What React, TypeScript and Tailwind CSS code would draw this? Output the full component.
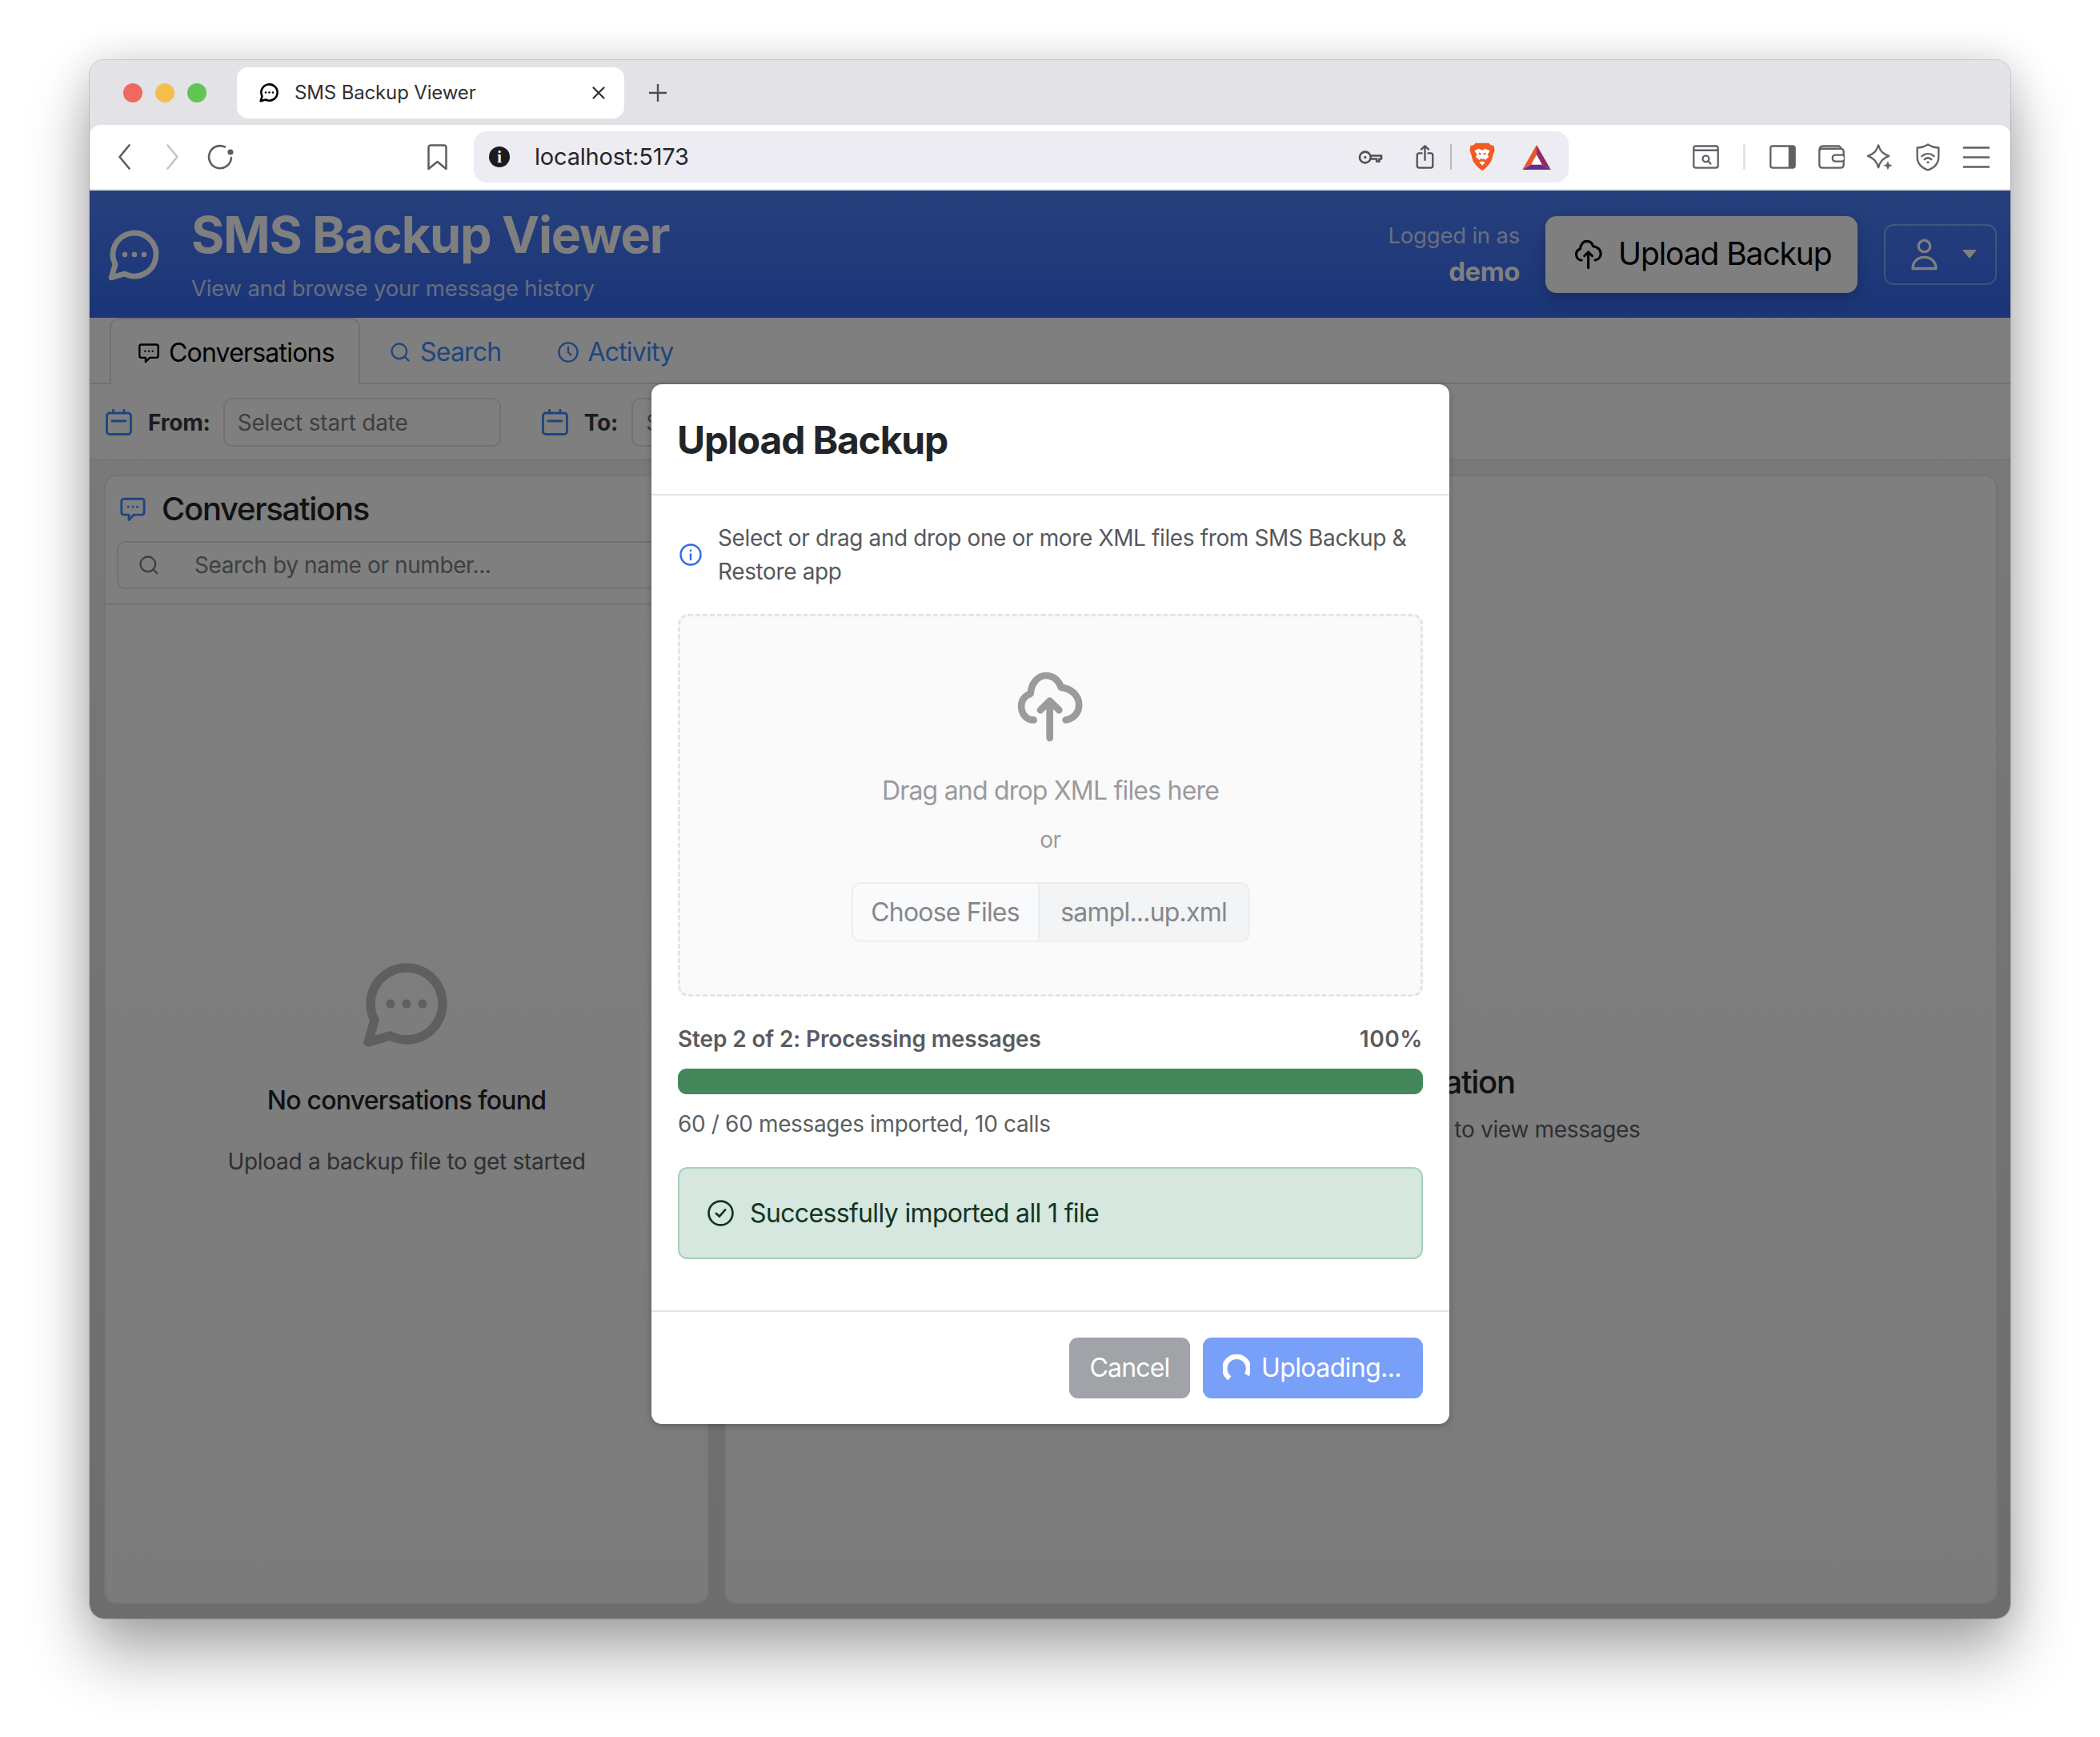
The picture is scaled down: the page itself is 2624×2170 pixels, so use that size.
import { Search } from "lucide-react";

type IconProps = { className?: string };

// Bubble with a tail at the lower left, used for the favicon, header and empty states.
function ChatBubble({ className }: IconProps) {
	return (
		<svg viewBox="0 0 24 24" fill="none" stroke="currentColor" strokeWidth="2.3" strokeLinejoin="round" className={className}>
			<path d="M7.9 20A9 9 0 1 0 4 16.1L2.4 21.6Z" />
			<circle cx="8" cy="12" r="1.1" fill="currentColor" stroke="none" />
			<circle cx="12" cy="12" r="1.1" fill="currentColor" stroke="none" />
			<circle cx="16" cy="12" r="1.1" fill="currentColor" stroke="none" />
		</svg>
	);
}

function ChatSquare({ className }: IconProps) {
	return (
		<svg viewBox="0 0 24 24" fill="none" stroke="currentColor" strokeWidth="2" strokeLinejoin="round" className={className}>
			<path d="M4 3h16a2 2 0 0 1 2 2v10a2 2 0 0 1-2 2h-7L8.5 21.5V17H4a2 2 0 0 1-2-2V5a2 2 0 0 1 2-2z" />
			<circle cx="8" cy="10" r="1" fill="currentColor" stroke="none" />
			<circle cx="12" cy="10" r="1" fill="currentColor" stroke="none" />
			<circle cx="16" cy="10" r="1" fill="currentColor" stroke="none" />
		</svg>
	);
}

function CloudUp({ className, width = 26 }: IconProps & { width?: number }) {
	return (
		<svg viewBox="90 55 255 265" fill="none" stroke="currentColor" strokeWidth={width} strokeLinecap="round" strokeLinejoin="round" className={className}>
			<path d="M155 237C125 237 108 212 108 185C108 162 122 145 143 138C145 100 170 70 200 70C228 70 250 88 258 115C295 118 325 145 325 180C325 210 305 232 275 237" />
			<path d="M215 305V165M180 200L215 165L250 200" />
		</svg>
	);
}

function Calendar({ className }: IconProps) {
	return (
		<svg viewBox="0 0 33 33" fill="none" stroke="currentColor" strokeWidth="2.8" strokeLinecap="round" className={className}>
			<rect x="1.5" y="5" width="30" height="26.5" rx="3.5" />
			<path d="M9.5 1v4M23 1v4M8 15h17" />
		</svg>
	);
}

function Clock({ className }: IconProps) {
	return (
		<svg viewBox="0 0 24 24" fill="none" stroke="currentColor" strokeWidth="2" strokeLinecap="round" strokeLinejoin="round" className={className}>
			<circle cx="12" cy="12" r="10" />
			<path d="M12 6.5V12l3 3" />
		</svg>
	);
}

function Person({ className }: IconProps) {
	return (
		<svg viewBox="0 0 100 120" fill="none" stroke="currentColor" strokeWidth="10" strokeLinejoin="round" className={className}>
			<circle cx="50" cy="28" r="22" />
			<path d="M6 113C6 86 26 70 50 70C74 70 94 86 94 113Z" />
		</svg>
	);
}

function Toolbar() {
	return (
		<div className="flex h-[82px] items-center rounded-t-[14px] border-b-2 border-[#e6e6ea] bg-white pl-[36px]">
			<svg viewBox="0 0 15 32" fill="none" stroke="#5b5e63" strokeWidth="2.6" strokeLinecap="round" strokeLinejoin="round" className="h-[32px] w-[15px]">
				<path d="M13.5 1.5L1.5 16L13.5 30.5" />
			</svg>
			<svg viewBox="0 0 15 32" fill="none" stroke="#c3c4c7" strokeWidth="2.6" strokeLinecap="round" strokeLinejoin="round" className="ml-[45px] h-[32px] w-[15px]">
				<path d="M1.5 1.5L13.5 16L1.5 30.5" />
			</svg>
			<svg viewBox="0 0 33 32" fill="none" stroke="#5b5e63" strokeWidth="2.6" strokeLinecap="round" className="ml-[36px] h-[32px] w-[33px]">
				<path d="M22 3.5A14 14 0 1 0 30 17" />
				<circle cx="29" cy="10" r="3.6" fill="#5b5e63" stroke="none" />
			</svg>
			<svg viewBox="0 0 25 33" fill="none" stroke="#5b5e63" strokeWidth="2.5" strokeLinejoin="round" className="ml-[242px] h-[33px] w-[25px]">
				<path d="M4 1.5H21A2.5 2.5 0 0 1 23.5 4V31L12.5 22L1.5 31V4A2.5 2.5 0 0 1 4 1.5Z" />
			</svg>

			<div className="ml-[33px] flex h-[64px] w-[1368px] items-center rounded-[16px] bg-[#edecf2] pl-[19px] pr-[22px]">
				<div className="flex h-[26px] w-[26px] items-center justify-center rounded-full bg-[#1c1c20] font-['Liberation_Serif',serif] text-[20px] font-bold text-white">
					i
				</div>
				<span className="ml-[31px] text-[29px] tracking-[-0.2px] text-[#25262a]">localhost:5173</span>
				<div className="ml-auto flex items-center">
					<svg viewBox="0 0 93 52" fill="none" stroke="#4f5156" strokeWidth="8" strokeLinejoin="round" className="h-[17px] w-[31px]">
						<circle cx="26" cy="26" r="21" />
						<circle cx="26" cy="26" r="5" fill="#4f5156" stroke="none" />
						<path d="M47 20H88V32H80V42H70V32H47" />
					</svg>
					<svg viewBox="0 0 68 92" fill="none" stroke="#4f5156" strokeWidth="7" strokeLinecap="round" strokeLinejoin="round" className="ml-[41px] h-[30px] w-[23px]">
						<path d="M34 5V58M20 17L34 4L48 17" />
						<path d="M22 32H12A8 8 0 0 0 4 40V80A8 8 0 0 0 12 88H56A8 8 0 0 0 64 80V40A8 8 0 0 0 56 32H46" />
					</svg>
					<div className="ml-[20px] h-[32px] w-[2px] bg-[#b9b9bd]" />
					<svg viewBox="0 0 95 110" className="ml-[22px] h-[36px] w-[32px]">
						<path d="M22 2H73L80 10L92 12L95 30L88 50C85 75 70 92 48 108C25 92 10 75 7 50L0 30L3 12L15 10Z" fill="#f15a22" />
						<path d="M18 32L34 24L47 30L60 24L77 32L68 46L73 55L58 68L55 60L48 64L41 60L38 68L23 55L28 46Z" fill="#fff" />
						<path d="M36 38L44 42L42 47L34 45ZM60 38L52 42L54 47L62 45Z" fill="#f15a22" />
						<path d="M37 76L48 72L59 76L48 88Z" fill="#fff" />
					</svg>
					<svg viewBox="0 0 108 94" className="ml-[34px] h-[31px] w-[36px]">
						<polygon points="54,0 54,38 34,74 0,94" fill="#e9582d" />
						<polygon points="54,0 108,94 74,74 54,38" fill="#932a63" />
						<polygon points="0,94 108,94 74,74 34,74" fill="#61308f" />
						<polygon points="54,38 74,74 34,74" fill="#fff" />
					</svg>
				</div>
			</div>

			<svg viewBox="0 0 100 90" fill="none" stroke="#5f6166" strokeWidth="7" strokeLinecap="round" className="ml-[155px] h-[30px] w-[33px]">
				<rect x="4" y="4" width="92" height="82" rx="8" />
				<path d="M4 20H96" />
				<circle cx="50" cy="52" r="12" />
				<path d="M59 61L68 71" />
			</svg>
			<div className="ml-[30px] h-[32px] w-[3px] rounded-full bg-[#e2e2e8]" />
			<svg viewBox="0 0 100 90" fill="none" stroke="#5f6166" strokeWidth="7" className="ml-[30px] h-[30px] w-[33px]">
				<rect x="4" y="4" width="92" height="82" rx="8" />
				<path d="M72 4H88A8 8 0 0 1 96 12V78A8 8 0 0 1 88 86H72Z" fill="#5f6166" stroke="none" />
			</svg>
			<svg viewBox="0 0 100 90" fill="none" stroke="#5f6166" strokeWidth="7" strokeLinejoin="round" className="ml-[28px] h-[30px] w-[33px]">
				<rect x="4" y="14" width="92" height="72" rx="10" />
				<path d="M4 22C4 10 10 4 18 4H74C82 4 86 10 86 14" />
				<rect x="54" y="38" width="46" height="24" rx="10" fill="#fff" />
			</svg>
			<svg viewBox="-2 -2 106 108" fill="none" stroke="#5f6166" strokeWidth="7" strokeLinejoin="round" className="ml-[27px] h-[35px] w-[34px]">
				<path d="M45 5C52 28 62 38 86 47C62 56 52 68 45 92C38 68 28 56 4 47C28 38 38 28 45 5Z" />
				<path d="M82 66L87 79L100 84L87 89L82 102L77 89L64 84L77 79Z" fill="#5f6166" stroke="none" />
			</svg>
			<svg viewBox="0 0 90 104" fill="none" stroke="#5f6166" strokeWidth="7" strokeLinecap="round" strokeLinejoin="round" className="ml-[28px] h-[35px] w-[30px]">
				<path d="M45 4C58 12 72 16 85 16V50C85 76 68 92 45 100C22 92 5 76 5 50V16C18 16 32 12 45 4Z" />
				<path d="M22 48C36 36 54 36 68 48M32 60C40 53 50 53 58 60" />
				<circle cx="45" cy="71" r="4.5" fill="#5f6166" stroke="none" />
			</svg>
			<svg viewBox="0 0 33 27" fill="none" stroke="#5f6166" strokeWidth="2.7" className="ml-[29px] h-[27px] w-[33px]">
				<path d="M0 1.5H33M0 13.5H33M0 25.5H33" />
			</svg>
		</div>
	);
}

function UploadModal() {
	return (
		<div className="absolute left-[702px] top-[242px] flex h-[1299px] w-[997px] flex-col overflow-hidden rounded-[13px] bg-white shadow-[0_2px_8px_rgba(0,0,0,0.25)]">
			<div className="flex h-[139px] shrink-0 items-center border-b-2 border-[#e1e4e8] pl-[32px] pr-[33px] pt-[2px]">
				<h2 className="text-[48px] font-bold tracking-[-1.2px] text-[#212529]">Upload Backup</h2>
			</div>

			<div className="flex flex-1 flex-col px-[33px] pt-[32px]">
				<div className="flex items-center gap-[20px]">
					<svg viewBox="0 0 28 28" fill="none" stroke="#2f68ee" strokeWidth="2.4" strokeLinecap="round" className="ml-[2px] h-[28px] w-[28px] shrink-0">
						<circle cx="14" cy="14" r="12.5" />
						<path d="M14 13.5V20" />
						<circle cx="14" cy="8.8" r="1.4" fill="#2f68ee" stroke="none" />
					</svg>
					<p className="text-[28px] leading-[42px] tracking-[-0.37px] text-[#55585c]">
						Select or drag and drop one or more XML files from SMS Backup &amp; Restore app
					</p>
				</div>

				<div className="mt-[32px] flex h-[478px] shrink-0 flex-col items-center rounded-[13px] border-[3px] border-dashed border-[#e4e4e6] bg-[#fafafa] pt-[69px]">
					<CloudUp className="h-[88px] w-[85px] text-[#9a9b9d]" />
					<p className="mt-[37px] text-[32px] leading-[48px] tracking-[-0.8px] text-[#9a9a9e]">Drag and drop XML files here</p>
					<p className="mt-[17px] text-[28px] leading-[40px] tracking-[-0.3px] text-[#9a9a9e]">or</p>
					<div className="mt-[33px] flex h-[75px] w-[498px] items-stretch overflow-hidden rounded-[12px] border-2 border-[#ecedef] text-[32px] tracking-[-0.8px] text-[#85878b]">
						<div className="flex w-[233px] items-center justify-center border-r-2 border-[#ecedef] bg-[#f9fafb]">Choose Files</div>
						<div className="flex flex-1 items-center justify-center bg-[#f3f4f6]">sampl...up.xml</div>
					</div>
				</div>

				<div className="mt-[35px] flex items-center justify-between text-[28px] font-semibold leading-[36px] tracking-[-0.14px] text-[#595c5f]">
					<span>Step 2 of 2: Processing messages</span>
					<span className="tracking-[0.6px]">100%</span>
				</div>
				<div className="mt-[19px] h-[32px] rounded-[11px] bg-[#43875a]" />
				<p className="mt-[17px] text-[28px] leading-[40px] tracking-[-0.35px] text-[#5c5f62]">60 / 60 messages imported, 10 calls</p>

				<div className="mt-[34px] flex h-[115px] items-center gap-[20px] rounded-[12px] border-2 border-[#a9cfbb] bg-[#d5e7de] pl-[35px] text-[32px] tracking-[-0.65px] text-[#123524]">
					<svg viewBox="0 0 32 32" fill="none" stroke="#123524" strokeWidth="2.6" strokeLinecap="round" strokeLinejoin="round" className="h-[33px] w-[33px]">
						<circle cx="16" cy="16" r="14.5" />
						<path d="M10.5 16.5L14.5 20L21.5 12" />
					</svg>
					Successfully imported all 1 file
				</div>
			</div>

			<div className="flex h-[142px] shrink-0 justify-end gap-[16px] border-t-2 border-[#e1e4e8] px-[33px] pt-[32px]">
				<div className="flex h-[76px] w-[151px] items-center justify-center rounded-[11px] bg-[#a0a3a8] text-[32px] tracking-[-0.8px] text-white">Cancel</div>
				<div className="flex h-[76px] w-[275px] items-center gap-[14px] rounded-[11px] bg-[#79a0f9] pl-[25px] text-[32px] tracking-[-0.6px] text-white">
					<svg viewBox="0 0 32 32" fill="none" stroke="#fff" strokeWidth="6" className="h-[34px] w-[34px]">
						<path d="M8 28A14 14 0 1 1 28 24" />
					</svg>
					Uploading...
				</div>
			</div>
		</div>
	);
}

export default function App() {
	return (
		<div className="h-[2170px] w-[2624px] overflow-hidden bg-white pl-[112px] pt-[75px] font-['Inter',sans-serif]">
			<div className="flex h-[1947px] w-[2400px] flex-col overflow-hidden rounded-[18px] bg-[#e3e2e7] shadow-[0_46px_80px_rgba(0,0,0,0.32),0_0_50px_rgba(0,0,0,0.14),0_0_0_1px_rgba(0,0,0,0.12)]">
				{/* tab strip */}
				<div className="flex h-[81px] shrink-0 items-center pl-[42px]">
					<div className="flex gap-[16px]">
						<div className="h-[24px] w-[24px] rounded-full bg-[#ef6a5e]" />
						<div className="h-[24px] w-[24px] rounded-full bg-[#f5bf4f]" />
						<div className="h-[24px] w-[24px] rounded-full bg-[#61c554]" />
					</div>
					<div className="ml-[38px] flex h-[64px] w-[484px] items-center rounded-[14px] bg-white pl-[27px] text-[24px] text-[#2f3034]">
						<ChatBubble className="h-[27px] w-[27px] text-black" />
						<span className="ml-[18px] tracking-[-0.15px]">SMS Backup Viewer</span>
						<svg viewBox="0 0 16 16" stroke="#2f3034" strokeWidth="2.2" strokeLinecap="round" className="ml-auto mr-[24px] h-[16px] w-[16px]">
							<path d="M1.5 1.5L14.5 14.5M14.5 1.5L1.5 14.5" />
						</svg>
					</div>
					<svg viewBox="0 0 22 22" stroke="#4b4d52" strokeWidth="2.4" className="ml-[31px] h-[22px] w-[22px]">
						<path d="M11 0V22M0 11H22" />
					</svg>
				</div>

				<Toolbar />

				{/* app page, dimmed by the modal backdrop */}
				<div className="relative flex flex-1 flex-col overflow-hidden bg-white">
					<header className="flex h-[159px] shrink-0 items-center bg-gradient-to-b from-[#4e80fa] to-[#346af0] pl-[24px] pr-[17px] text-white">
						<ChatBubble className="-ml-[4px] h-[72px] w-[72px]" />
						<div className="ml-[35px] flex flex-col">
							<h1 className="mt-[5px] text-[63px] font-bold leading-[64px] tracking-[-1.25px]">SMS Backup Viewer</h1>
							<p className="mt-[15px] text-[27.5px] leading-[40px] tracking-[-0.2px] text-white/75">View and browse your message history</p>
						</div>
						<div className="ml-auto -mt-[2px] flex flex-col items-end">
							<span className="text-[27.5px] leading-[44px] tracking-[-0.2px] text-white/75">Logged in as</span>
							<span className="text-[33px] font-bold leading-[46px] tracking-[-0.5px]">demo</span>
						</div>
						<div className="ml-[32px] flex h-[96px] w-[390px] items-center gap-[19px] rounded-[14px] bg-white pl-[36px] text-[39px] tracking-[-1.1px] text-black shadow-[0_8px_20px_rgba(0,0,0,0.2)]">
							<CloudUp className="h-[38px] w-[36px]" width={22} />
							Upload Backup
						</div>
						<div className="ml-[33px] flex h-[76px] w-[141px] items-center rounded-[12px] border-2 border-white/35 pl-[32px]">
							<Person className="h-[40px] w-[33px]" />
							<div className="ml-[31px] h-0 w-0 border-x-[9px] border-t-[11px] border-x-transparent border-t-white" />
						</div>
					</header>

					<nav className="flex h-[83px] shrink-0 border-b-2 border-[#dee2e6] pl-[25px] text-[32px] tracking-[-0.8px]">
						<div className="flex h-[83px] w-[313px] items-center gap-[11px] rounded-t-[12px] border-2 border-b-0 border-[#dee2e6] bg-white pl-[33px] pt-[2px] text-black">
							<ChatSquare className="h-[28px] w-[28px]" />
							Conversations
						</div>
						<div className="flex items-center gap-[11px] pl-[36px] pr-[35px] pt-[4px] text-[#3d8bff]">
							<Search className="h-[28px] w-[28px]" strokeWidth={2} />
							Search
						</div>
						<div className="flex items-center gap-[10px] pl-[35px] pt-[4px] text-[#3d8bff]">
							<Clock className="h-[28px] w-[28px]" />
							Activity
						</div>
					</nav>

					<div className="flex h-[95px] shrink-0 items-center border-b-2 border-[#e8e9ea] bg-white pl-[20px] pt-[2px] text-[28px] tracking-[-0.2px]">
						<Calendar className="h-[33px] w-[33px] text-[#3d8bff]" />
						<span className="ml-[20px] font-bold text-[#343a40]">From:</span>
						<div className="ml-[16px] flex h-[61px] w-[347px] items-center rounded-[10px] border-2 border-[#e5e5e5] pl-[16px] text-[#7d7e80]">Select start date</div>
						<Calendar className="ml-[51px] h-[33px] w-[33px] text-[#3d8bff]" />
						<span className="ml-[20px] font-bold text-[#343a40]">To:</span>
						<div className="ml-[17px] flex h-[61px] w-[347px] items-center rounded-[10px] border-2 border-[#e5e5e5] pl-[16px] text-[#7d7e80]">Select end date</div>
					</div>

					<main className="flex min-h-0 flex-1 gap-[19px] bg-gradient-to-b from-[#f0f2f2] to-[#dadbda] p-[18px] pr-[16px]">
						<section className="flex w-[756px] flex-col rounded-[16px] border-2 border-[#e8e8e8] bg-gradient-to-b from-[#ffffff] to-[#f7f7f7]">
							<div className="border-b-2 border-[#e5e5e5] px-[14px] pb-[18px] pt-[17px]">
								<div className="flex h-[48px] items-center gap-[19px] pl-[3px]">
									<ChatSquare className="h-[34px] w-[34px] text-[#3d8bff]" />
									<h3 className="text-[40px] font-medium tracking-[-1.3px] text-[#212529]">Conversations</h3>
								</div>
								<div className="mt-[16px] flex h-[60px] items-center gap-[43px] rounded-[10px] border-2 border-[#e5e5e5] pl-[24px] text-[28px] tracking-[-0.4px] text-[#7d7e80]">
									<Search className="h-[28px] w-[28px]" strokeWidth={2} />
									Search by name or number...
								</div>
							</div>
							<div className="flex flex-1 flex-col items-center pt-[450px]">
								<ChatBubble className="-my-[12px] h-[120px] w-[120px] text-[#bcbec0]" />
								<p className="mt-[49px] text-[32px] font-medium leading-[48px] tracking-[-0.75px] text-[#212529]">No conversations found</p>
								<p className="mt-[31px] text-[28px] leading-[42px] tracking-[-0.3px] text-[#5c6064]">Upload a backup file to get started</p>
							</div>
						</section>

						<section className="flex flex-1 flex-col items-center rounded-[16px] border-2 border-[#e8e8e8] bg-gradient-to-b from-[#ffffff] to-[#f7f7f7] pt-[733px]">
							<p className="text-[40px] font-medium leading-[48px] tracking-[-1.3px] text-[#212529]">Select a conversation</p>
							<p className="mt-[14px] text-[28px] leading-[42px] tracking-[-0.3px] text-[#5c6064]">Choose a conversation from the list to view messages</p>
						</section>
					</main>

					<div className="absolute inset-0 bg-black/50" />
					<UploadModal />
				</div>
			</div>
		</div>
	);
}
